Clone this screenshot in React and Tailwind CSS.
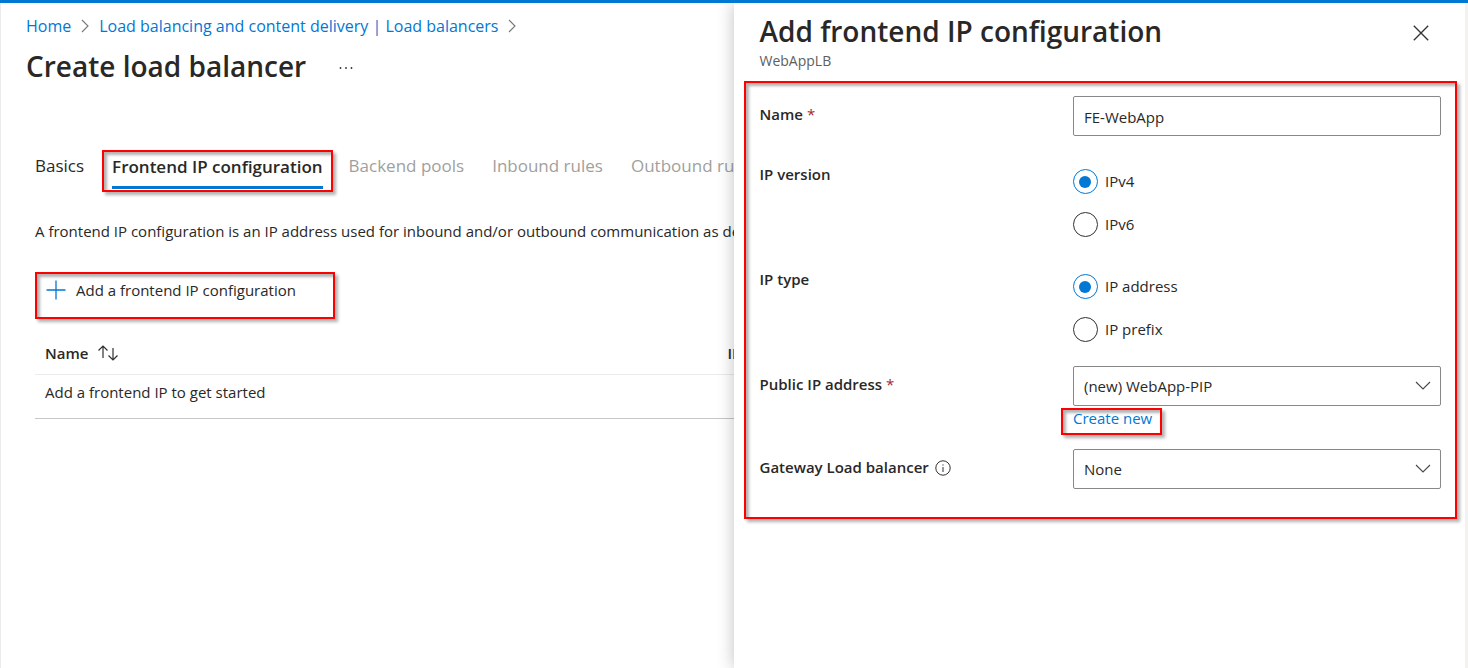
import { useState } from "react";

function ChevronRight() {
  return (
    <svg className="h-4 w-2 shrink-0" viewBox="0 0 8 16" fill="none" stroke="#767676" strokeWidth="1.1" aria-hidden="true">
      <path d="M1 2l6 6-6 6" />
    </svg>
  );
}

function ChevronDown() {
  return (
    <svg
      className="pointer-events-none absolute top-3 right-2.5 h-4 w-4"
      viewBox="0 0 16 16"
      fill="none"
      stroke="#4a4846"
      strokeWidth="1.1"
      aria-hidden="true"
    >
      <path d="M1 4l7 7 7-7" />
    </svg>
  );
}

const highlight =
  "border-2 border-[#ff0000] shadow-[3px_3px_3px_rgba(0,0,0,0.3),inset_3px_3px_3px_rgba(0,0,0,0.3)]";

function FieldRow({ label, htmlFor, required, info, children }) {
  const text = (
    <>
      {label}
      {required && <span className="ml-1 font-normal text-[#a4262c]">*</span>}
    </>
  );
  return (
    <div className="grid grid-cols-[46fr_54fr]">
      <div className="flex items-center gap-1.5 self-start pt-1.5 text-[15px] leading-6 font-semibold">
        {htmlFor ? <label htmlFor={htmlFor}>{text}</label> : <span>{text}</span>}
        {info && (
          <svg className="mt-0.5 h-4 w-4" viewBox="0 0 16 16" fill="none" stroke="#323130" aria-hidden="true">
            <circle cx="8" cy="8" r="7.2" />
            <path d="M8 7v5M8 4.400v1.200" />
          </svg>
        )}
      </div>
      <div className="min-w-0">{children}</div>
    </div>
  );
}

function RadioGroup({ name, options }) {
  const [value, setValue] = useState(options[0]);
  return (
    <div role="radiogroup" aria-label={name} className="flex flex-col gap-[18px] pt-[13px] pb-1">
      {options.map((option) => (
        <label key={option} className="flex h-[25px] items-center gap-[7px] text-[15px]">
          <input
            type="radio"
            name={name}
            checked={value === option}
            onChange={() => setValue(option)}
            className="grid h-[25px] w-[25px] appearance-none place-items-center rounded-full border border-[#323130] bg-white before:h-3 before:w-3 before:rounded-full checked:border-[#0078d4] checked:before:bg-[#0078d4]"
          />
          {option}
        </label>
      ))}
    </div>
  );
}

function SelectBox({ id, options }) {
  return (
    <div className="relative">
      <select
        id={id}
        className="block h-10 w-full appearance-none rounded-xs border border-[#8a8886] bg-white px-[10px] text-[15px]"
      >
        {options.map((option) => (
          <option key={option}>{option}</option>
        ))}
      </select>
      <ChevronDown />
    </div>
  );
}

export default function App() {
  const [name, setName] = useState("FE-WebApp");
  return (
    <div className="flex min-h-screen flex-col border-t-3 border-[#0078d4] bg-white font-['Open_Sans','Noto_Sans',sans-serif] text-[#292827]">
      <div className="flex flex-1 border-r-3 border-[#f3f2f1]">
        <main className="min-w-0 flex-1 overflow-hidden border-l border-[#ebebeb] whitespace-nowrap">
          <nav aria-label="Breadcrumb" className="flex items-center gap-2.5 pt-[11px] pl-[25px] text-[16px] leading-6 text-[#0078d4]">
            <a href="#home">Home</a>
            <ChevronRight />
            <a href="#load-balancers">Load balancing and content delivery | Load balancers</a>
            <ChevronRight />
          </nav>
          <div className="mt-2 flex items-center gap-8 pl-[25px]">
            <h1 className="text-[28px] leading-10 font-semibold">Create load balancer</h1>
            <button type="button" aria-label="More actions">
              <svg className="h-4 w-4" viewBox="0 0 16 16" fill="#323130" aria-hidden="true">
                <circle cx="2.5" cy="10" r="0.9" />
                <circle cx="8" cy="10" r="0.9" />
                <circle cx="13.5" cy="10" r="0.9" />
              </svg>
            </button>
          </div>

          <div className="pl-[34px]">
            <div role="tablist" className="mt-16 flex h-[42px] items-start text-[17px] leading-6">
              <button role="tab" type="button" className="pt-1">Basics</button>
              <button
                role="tab"
                type="button"
                aria-selected="true"
                className={`ml-[18px] h-[42px] px-2 ${highlight} font-semibold`}
              >
                <span className="block h-9 border-b-3 border-[#0078d4] pt-0.5">Frontend IP configuration</span>
              </button>
              <div className="ml-4 flex gap-7 pt-1 text-[#a19f9d]">
                <button role="tab" type="button" disabled>Backend pools</button>
                <button role="tab" type="button" disabled>Inbound rules</button>
                <button role="tab" type="button" disabled>Outbound rules</button>
              </div>
            </div>

            <p className="mt-[27px] text-[15px] leading-6">
              A frontend IP configuration is an IP address used for inbound and/or outbound communication as defined within rules.
            </p>

            <button
              type="button"
              className={`mt-[29px] flex h-[47px] w-[300px] items-start gap-2.5 px-[9px] pt-1 text-[15px] leading-6 ${highlight}`}
            >
              <svg className="mt-0.5 h-5 w-5 shrink-0" viewBox="0 0 20 20" fill="none" stroke="#0078d4" strokeWidth="1.3" aria-hidden="true">
                <path d="M10 .5v19M.5 10h19" />
              </svg>
              Add a frontend IP configuration
            </button>

            <table className="mt-[15px] w-full table-fixed text-left text-[15px] leading-6">
              <thead>
                <tr className="border-b border-[#edebe9]">
                  <th className="h-10 pb-0.5 pl-2.5 font-semibold">
                    <span className="flex items-center gap-2.5">
                      Name
                      <svg className="h-4 w-5" viewBox="0 0 20 16" fill="none" stroke="#323130" strokeWidth="1.2" aria-hidden="true">
                        <path d="M5 13V1M.5 5.500 5 1l4.500 4.500M15 3v12M10.500 10.500 15 15l4.500-4.500" />
                      </svg>
                    </span>
                  </th>
                  <th className="w-[6px] pb-0.5 font-semibold">IP address</th>
                </tr>
              </thead>
              <tbody>
                <tr className="border-b border-[#c8c6c4]">
                  <td colSpan={2} className="h-11 pb-2 pl-2.5">Add a frontend IP to get started</td>
                </tr>
              </tbody>
            </table>
          </div>
        </main>

        <aside className="z-10 w-[calc(50%-1px)] bg-white pr-2 pl-2.5 shadow-[0_0_16px_rgba(0,0,0,0.25)] [clip-path:inset(0_0_0_-24px)]">
          <header className="flex items-start justify-between pt-2 pr-7 pl-4">
            <div>
              <h2 className="text-[28px] leading-10 font-semibold">Add frontend IP configuration</h2>
              <p className="text-[14px] leading-5 text-[#605e5c]">WebAppLB</p>
            </div>
            <button type="button" aria-label="Close" className="pt-3.5">
              <svg className="h-4 w-4" viewBox="0 0 16 16" fill="none" stroke="#323130" strokeWidth="1.3" aria-hidden="true">
                <path d="M.8.8l14.400 14.400M15.200.8.8 15.200" />
              </svg>
            </button>
          </header>

          <form className={`mt-2.5 flex flex-col gap-5 px-3.5 pt-[13px] pb-7 ${highlight}`}>
            <FieldRow label="Name" htmlFor="name" required>
              <input
                id="name"
                type="text"
                value={name}
                onChange={(event) => setName(event.target.value)}
                className="block h-10 w-full rounded-xs border border-[#8a8886] px-[10px] pt-0.5 text-[15px]"
              />
            </FieldRow>
            <FieldRow label="IP version">
              <RadioGroup name="IP version" options={["IPv4", "IPv6"]} />
            </FieldRow>
            <FieldRow label="IP type">
              <RadioGroup name="IP type" options={["IP address", "IP prefix"]} />
            </FieldRow>
            <FieldRow label="Public IP address" htmlFor="public-ip" required>
              <SelectBox id="public-ip" options={["(new) WebApp-PIP"]} />
              <a href="#create-new" className="relative block h-[23px] w-fit text-[15px] leading-6 text-[#0078d4]">
                Create new
                <span className={`absolute top-0.5 -right-2.5 -left-3 h-[27px] ${highlight}`} />
              </a>
            </FieldRow>
            <FieldRow label="Gateway Load balancer" htmlFor="gateway" info>
              <SelectBox id="gateway" options={["None"]} />
            </FieldRow>
          </form>
        </aside>
      </div>
    </div>
  );
}
